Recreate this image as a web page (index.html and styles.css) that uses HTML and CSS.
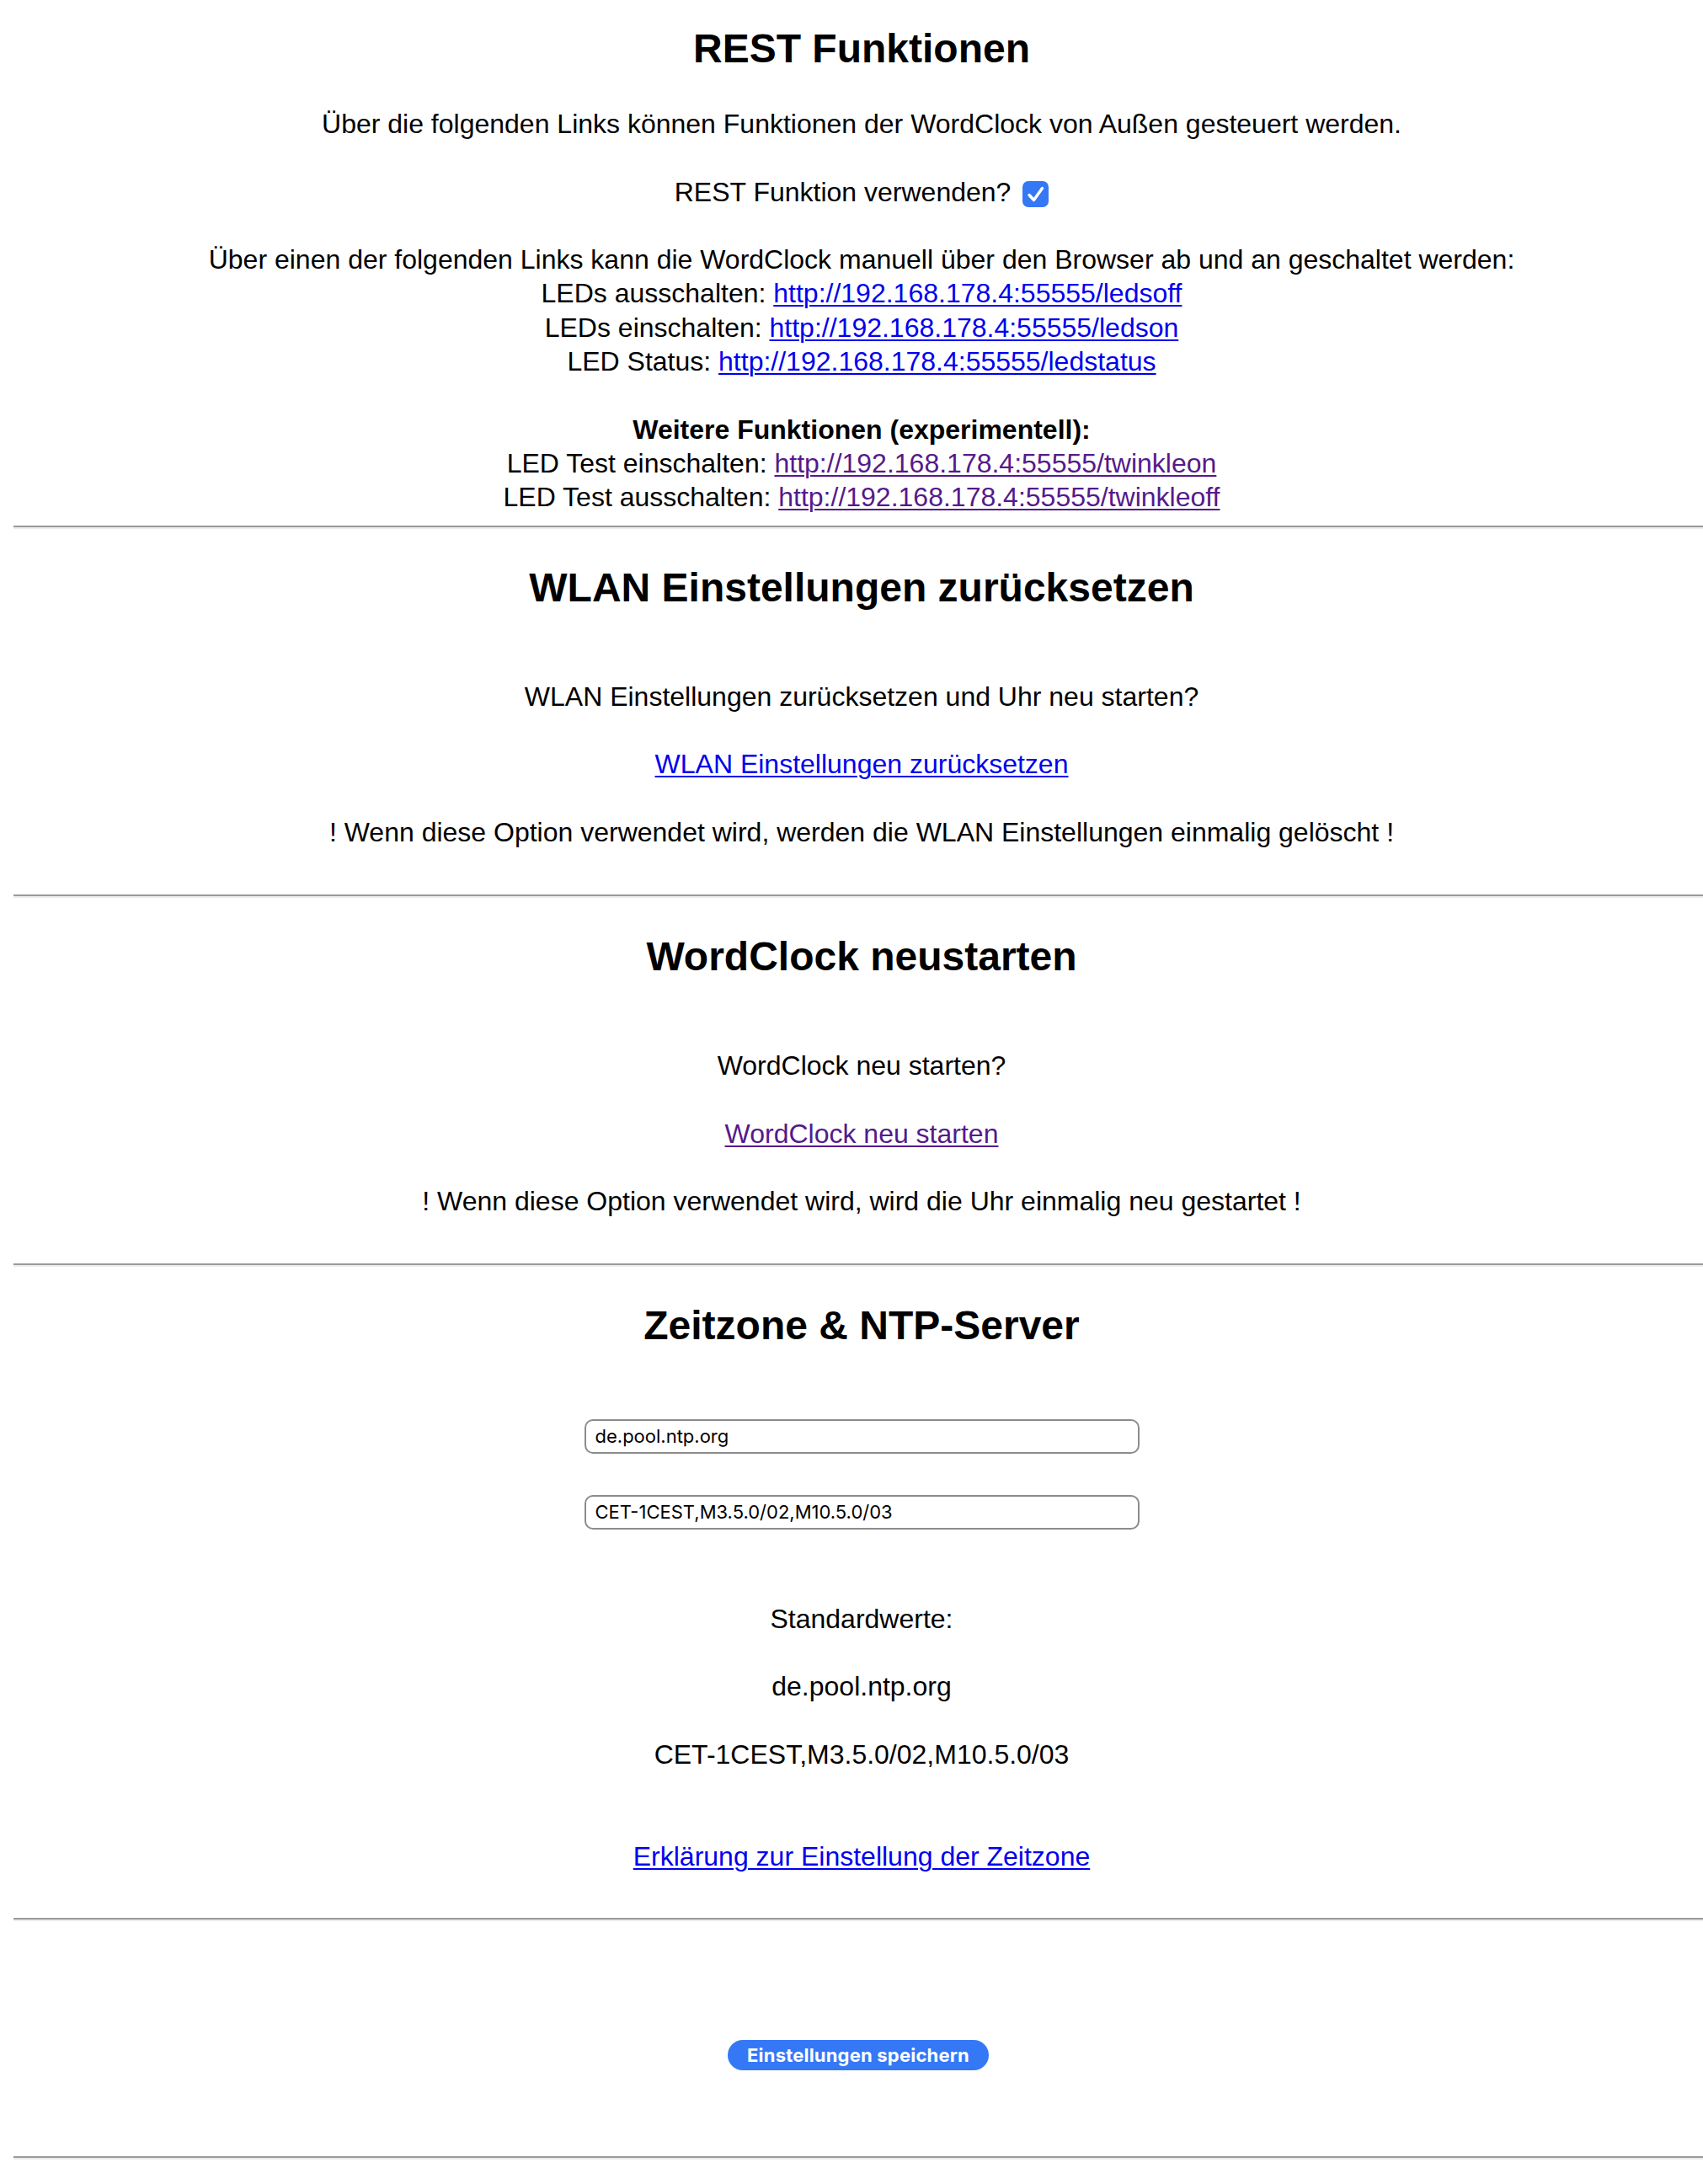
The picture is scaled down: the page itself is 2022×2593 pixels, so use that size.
FILE: index.html
```html
<!DOCTYPE html>
<html lang="de">
<head>
<meta charset="utf-8">
<title>WordClock Einstellungen</title>
<link rel="stylesheet" href="styles.css">
</head>
<body>
  <section class="block">
    <h2 class="title first">REST Funktionen</h2>
    <div class="lines">
      <div>Über die folgenden Links können Funktionen der WordClock von Außen gesteuert werden.</div>
      <div class="blank"></div>
      <div>REST Funktion verwenden? <svg class="check" width="31" height="31" viewBox="0 0 31 31"><rect x="0" y="0" width="31" height="31" rx="7" fill="#3478f6"/><path d="M8 16.5 L13.5 22.5 L23.5 8.5" fill="none" stroke="#fff" stroke-width="3.4" stroke-linecap="round" stroke-linejoin="round"/></svg></div>
      <div class="blank"></div>
      <div>Über einen der folgenden Links kann die WordClock manuell über den Browser ab und an geschaltet werden:</div>
      <div>LEDs ausschalten: <a href="#ledsoff">http://192.168.178.4:55555/ledsoff</a></div>
      <div>LEDs einschalten: <a href="#ledson">http://192.168.178.4:55555/ledson</a></div>
      <div>LED Status: <a href="#ledstatus">http://192.168.178.4:55555/ledstatus</a></div>
      <div class="blank"></div>
      <div class="strong">Weitere Funktionen (experimentell):</div>
      <div>LED Test einschalten: <a class="visited" href="#twinkleon">http://192.168.178.4:55555/twinkleon</a></div>
      <div>LED Test ausschalten: <a class="visited" href="#twinkleoff">http://192.168.178.4:55555/twinkleoff</a></div>
    </div>
  </section>
  <hr class="rule">
  <section class="block">
    <h2 class="title">WLAN Einstellungen zurücksetzen</h2>
    <div class="lines">
      <div class="blank"></div>
      <div>WLAN Einstellungen zurücksetzen und Uhr neu starten?</div>
      <div class="blank"></div>
      <div><a href="#wifireset">WLAN Einstellungen zurücksetzen</a></div>
      <div class="blank"></div>
      <div>! Wenn diese Option verwendet wird, werden die WLAN Einstellungen einmalig gelöscht !</div>
      <div class="blank"></div>
    </div>
  </section>
  <hr class="rule">
  <section class="block">
    <h2 class="title">WordClock neustarten</h2>
    <div class="lines">
      <div class="blank"></div>
      <div>WordClock neu starten?</div>
      <div class="blank"></div>
      <div><a class="visited" href="#reboot">WordClock neu starten</a></div>
      <div class="blank"></div>
      <div>! Wenn diese Option verwendet wird, wird die Uhr einmalig neu gestartet !</div>
      <div class="blank"></div>
    </div>
  </section>
  <hr class="rule">
  <section class="block">
    <h2 class="title">Zeitzone &amp; NTP-Server</h2>
    <div class="fields">
      <input class="field" type="text" value="de.pool.ntp.org">
      <input class="field" type="text" value="CET-1CEST,M3.5.0/02,M10.5.0/03">
    </div>
    <div class="lines defaults">
      <div>Standardwerte:</div>
      <div class="blank"></div>
      <div>de.pool.ntp.org</div>
      <div class="blank"></div>
      <div>CET-1CEST,M3.5.0/02,M10.5.0/03</div>
      <div class="blank"></div>
      <div class="blank"></div>
      <div><a href="#tz">Erklärung zur Einstellung der Zeitzone</a></div>
      <div class="blank"></div>
    </div>
  </section>
  <hr class="rule">
  <div class="actions">
    <button class="save" type="button">Einstellungen speichern</button>
  </div>
  <hr class="rule">
</body>
</html>
```

FILE: styles.css
```css
html {
  background: #ffffff;
}

body {
  margin: 0 0 0 16px;
  width: 2014px;
  font-family: "Liberation Sans", Arial, Helvetica, sans-serif;
  font-size: 32px;
  line-height: 40.3px;
  color: #000000;
  text-align: center;
  background: #ffffff;
}

.block {
  display: block;
}

.title {
  box-sizing: border-box;
  height: 58px;
  padding-top: 2px;
  font-size: 48px;
  line-height: 56px;
  font-weight: bold;
  margin: 40px 0 38px;
}

.title.first {
  margin-top: 28px;
}

.lines > div {
  box-sizing: border-box;
  height: 40.3px;
  padding-top: 3px;
}

.strong {
  font-weight: bold;
}

a {
  color: #0000ee;
  text-decoration: underline;
  text-decoration-thickness: 2px;
  text-underline-offset: 3px;
}

a.visited {
  color: #551a8b;
}

.check {
  display: inline-block;
  vertical-align: -7px;
  margin-left: 5px;
}

.rule {
  height: 0;
  margin: 16px 0;
  border: 0;
  border-top: 2px solid #9a9a9a;
  border-bottom: 2px solid #ececec;
}

.fields {
  display: flex;
  flex-direction: column;
  align-items: center;
  gap: 49px;
  padding-top: 45px;
}

.field {
  box-sizing: border-box;
  width: 659px;
  height: 41px;
  margin: 0;
  padding: 0 11px;
  border: 2px solid #8c8c8c;
  border-radius: 10px;
  font-family: Inter, "Liberation Sans", sans-serif;
  font-size: 22px;
  color: #000000;
  background: #ffffff;
  outline: none;
}

.defaults {
  margin-top: 83px;
}

.actions {
  margin: 141px 0 102px;
  display: flex;
  justify-content: center;
}

.save {
  box-sizing: border-box;
  height: 36px;
  margin: 0 8px 0 0;
  padding: 0 23px;
  border: 0;
  border-radius: 18px;
  background: #3478f6;
  color: #ffffff;
  font-family: Inter, "Liberation Sans", sans-serif;
  font-weight: 700;
  font-size: 22px;
  line-height: 36px;
  letter-spacing: 0.2px;
}
```
